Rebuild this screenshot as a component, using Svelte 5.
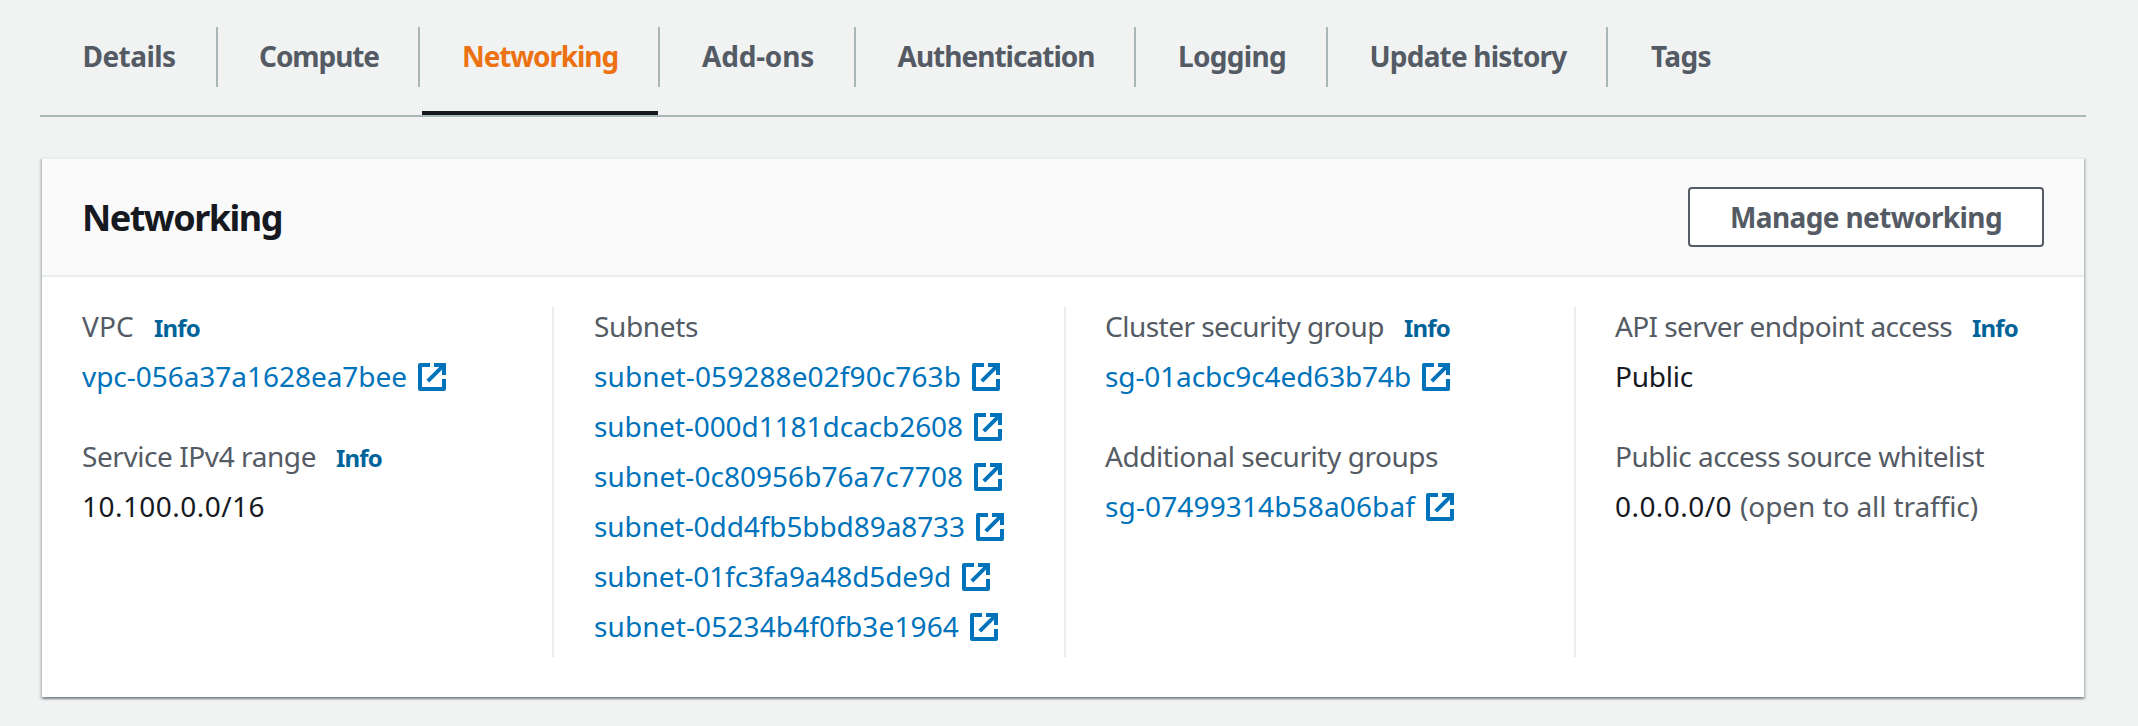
<script>
  const tabs = [
    { label: 'Details', text: 93, width: 178 },
    { label: 'Compute', text: 120, width: 202 },
    { label: 'Networking', text: 156, width: 240, active: true },
    { label: 'Add-ons', text: 112, width: 196 },
    { label: 'Authentication', text: 197, width: 280 },
    { label: 'Logging', text: 108, width: 192 },
    { label: 'Update history', text: 197, width: 280 },
    { label: 'Tags', text: 60, width: 144 },
  ];

  const columns = [
    [
      { label: 'VPC', w: 52, info: true, links: [['vpc-056a37a1628ea7bee', 325]] },
      { label: 'Service IPv4 range', w: 234, info: true, value: '10.100.0.0/16', vw: 183 },
    ],
    [
      {
        label: 'Subnets', w: 104,
        links: [
          ['subnet-059288e02f90c763b', 367],
          ['subnet-000d1181dcacb2608', 369],
          ['subnet-0c80956b76a7c7708', 369],
          ['subnet-0dd4fb5bbd89a8733', 371],
          ['subnet-01fc3fa9a48d5de9d', 357],
          ['subnet-05234b4f0fb3e1964', 365],
        ],
      },
    ],
    [
      { label: 'Cluster security group', w: 279, info: true, links: [['sg-01acbc9c4ed63b74b', 306]] },
      { label: 'Additional security groups', w: 333, links: [['sg-07499314b58a06baf', 310]] },
    ],
    [
      { label: 'API server endpoint access', w: 337, info: true, value: 'Public', vw: 78 },
      { label: 'Public access source whitelist', w: 369, value: '0.0.0.0/0', vw: 117, note: '(open to all traffic)', nw: 238 },
    ],
  ];

  // Tracks the text so that its advance width equals the given number of pixels.
  function fit(node, width) {
    const natural = node.getBoundingClientRect().width;
    node.style.letterSpacing = `${(width - natural) / node.textContent.length}px`;
  }
</script>

{#snippet external()}
  <svg class="external" viewBox="0 0 28 28" width="28" height="28" aria-hidden="true">
    <path d="M12 2H2v24h24V16" fill="none" stroke="currentColor" stroke-width="4" stroke-linejoin="round" />
    <path d="M16 0h12v12h-4V6.8L11.2 19.6 8.4 16.8 21.2 4H16z" fill="currentColor" />
  </svg>
{/snippet}

<main>
  <nav>
    {#each tabs as tab}
      <a class="tab" class:active={tab.active} style="width: {tab.width}px">
        <span use:fit={tab.text}>{tab.label}</span>
      </a>
    {/each}
  </nav>

  <section>
    <header>
      <h2><span use:fit={200}>Networking</span></h2>
      <button><span use:fit={272}>Manage networking</span></button>
    </header>
    <div class="columns">
      {#each columns as groups}
        <div class="column">
          {#each groups as group}
            <div class="group">
              <div class="row label">
                <span use:fit={group.w}>{group.label}</span>
                {#if group.info}<a class="info"><span use:fit={46}>Info</span></a>{/if}
              </div>
              {#each group.links ?? [] as [id, w]}
                <div class="row">
                  <a class="link"><span use:fit={w}>{id}</span>{@render external()}</a>
                </div>
              {/each}
              {#if group.value}
                <div class="row value">
                  <span use:fit={group.vw}>{group.value}</span>
                  {#if group.note}<span class="note" use:fit={group.nw}>{group.note}</span>{/if}
                </div>
              {/if}
            </div>
          {/each}
        </div>
      {/each}
    </div>
  </section>
</main>

<style>
  :global(body) {
    background: #f1f3f3;
  }
  main {
    box-sizing: border-box;
    height: 726px;
    padding: 27px 52px 0 40px;
    font-family: 'Noto Sans', 'Open Sans', sans-serif;
    font-size: 28px;
    font-weight: 450;
    color: #16191f;
  }
  span {
    white-space: nowrap;
  }
  nav {
    display: flex;
    height: 88px;
    border-bottom: 2px solid #aab7b8;
  }
  .tab {
    position: relative;
    box-sizing: border-box;
    display: flex;
    flex: none;
    justify-content: center;
    height: 60px;
    padding-left: 2px;
    line-height: 59px;
    border-right: 2px solid #aab7b8;
    font-weight: 700;
    color: #545b64;
  }
  .tab:last-child {
    border-right: none;
  }
  .tab.active {
    color: #ec7211;
  }
  .tab.active::after {
    content: '';
    position: absolute;
    left: 2px;
    right: 0;
    top: 84px;
    height: 4px;
    background: #16191f;
  }
  section {
    box-sizing: border-box;
    height: 540px;
    margin: 40px 2px 0;
    border-top: 2px solid #eaeded;
    background: #fff;
    box-shadow:
      0 2px 2px 0 rgba(0, 28, 36, 0.3),
      2px 2px 2px 0 rgba(0, 28, 36, 0.15),
      -2px 2px 2px 0 rgba(0, 28, 36, 0.15);
  }
  header {
    box-sizing: border-box;
    display: flex;
    justify-content: space-between;
    align-items: flex-start;
    height: 118px;
    padding: 28px 40px 0;
    border-bottom: 2px solid #eaeded;
    background: #fafafa;
  }
  h2 {
    margin: 0;
    font-size: 36px;
    line-height: 62px;
  }
  button {
    width: 356px;
    height: 60px;
    padding: 0;
    border: 2px solid #545b64;
    border-radius: 4px;
    background: #fff;
    color: #545b64;
    font: 700 28px/56px 'Noto Sans', 'Open Sans', sans-serif;
  }
  .columns {
    display: grid;
    grid-template-columns: 512px 512px 510px 1fr;
    height: 350px;
    padding-top: 30px;
  }
  .column {
    display: flex;
    flex-direction: column;
    gap: 30px;
    padding-left: 40px;
    border-right: 2px solid #eaeded;
  }
  .column:nth-child(n + 3) {
    padding-left: 39px;
  }
  .column:last-child {
    border-right: none;
  }
  .row {
    display: flex;
    align-items: baseline;
    height: 50px;
    line-height: 38px;
  }
  .label,
  .note {
    color: #545b64;
  }
  .info {
    margin-left: 20px;
    font-size: 24px;
    font-weight: 700;
    color: #00649b;
  }
  .link {
    display: flex;
    color: #0073bb;
  }
  .external {
    margin: 6px 0 0 11px;
  }
  .note {
    margin-left: 8px;
  }
</style>
